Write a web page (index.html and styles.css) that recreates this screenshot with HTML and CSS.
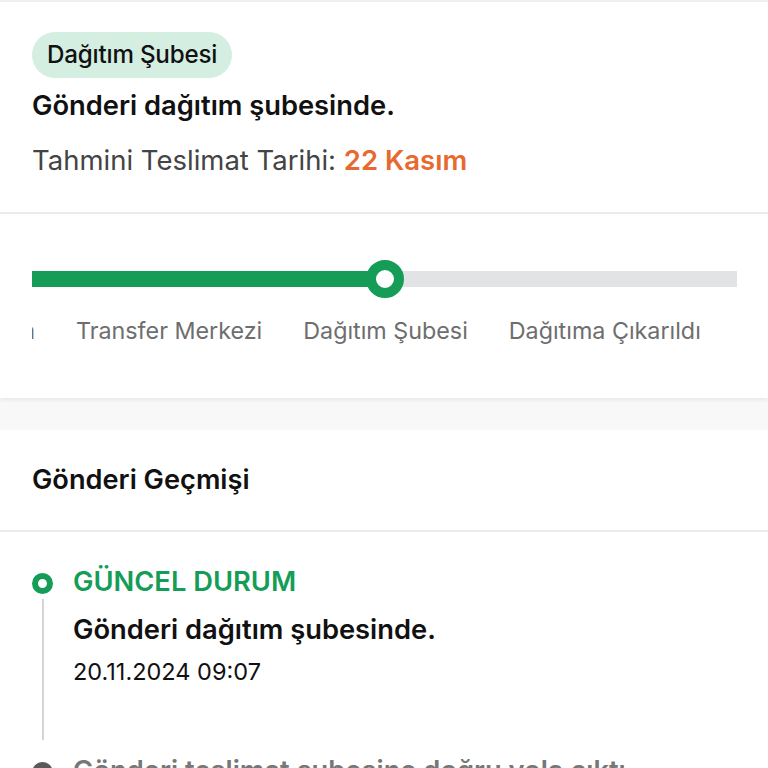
FILE: index.html
```html
<!DOCTYPE html>
<html>
    <head>
        <title>Gönderi Takip</title>
        <link rel="stylesheet" href="styles.css">
    </head>

    <body>
        <div class="summary">
            <span class="badge">Dağıtım Şubesi</span>
            <p class="summary-title">Gönderi dağıtım şubesinde.</p>
            <p class="summary-date">Tahmini Teslimat Tarihi: <span class="date-value">22 Kasım</span></p>
        </div>

        <div class="progress">
            <div class="bar">
                <div class="bar-fill" style="width: 353px;"></div>
                <div class="bar-dot" style="left: 334px;"></div>
            </div>
            <div class="steps">
                <div class="steps-track">
                    <span class="step">Yolda</span>
                    <span class="step">Transfer Merkezi</span>
                    <span class="step">Dağıtım Şubesi</span>
                    <span class="step">Dağıtıma Çıkarıldı</span>
                    <span class="step">Teslim Edildi</span>
                </div>
            </div>
        </div>

        <div class="gap"></div>

        <div class="history">
            <div class="history-head">Gönderi Geçmişi</div>

            <div class="events">
                <div class="event">
                    <div class="event-side">
                        <span class="ring"></span>
                        <span class="event-line"></span>
                    </div>
                    <div class="event-body">
                        <p class="event-status">GÜNCEL DURUM</p>
                        <p class="event-title">Gönderi dağıtım şubesinde.</p>
                        <p class="event-time">20.11.2024 09:07</p>
                    </div>
                </div>

                <div class="event past">
                    <div class="event-side">
                        <svg class="check" width="21" height="21" viewBox="0 0 21 21">
                            <circle cx="10.5" cy="10.5" r="10.5" fill="#5a5a5a"/>
                            <path d="M6 10.8l3 3 6-6.2" stroke="white" stroke-width="2.2" fill="none" stroke-linecap="round" stroke-linejoin="round"/>
                        </svg>
                        <span class="event-line"></span>
                    </div>
                    <div class="event-body">
                        <p class="event-title">Gönderi teslimat şubesine doğru yola çıktı.</p>
                        <p class="event-time">20.11.2024 06:12</p>
                    </div>
                </div>
            </div>
        </div>
    </body>
</html>
```

FILE: styles.css
```css
body {
    margin: 0;
    background-color: white;
    font-family: Inter, "Noto Sans", sans-serif;
    color: #111;
}

p {
    margin: 0;
}

.summary {
    border-top: 2px solid #f0f0f0;
    border-bottom: 2px solid #ececec;
    padding: 30px 32px 36px;
}
.badge {
    display: inline-block;
    background-color: #d4eee2;
    border-radius: 23px;
    padding: 0 15px;
    height: 46px;
    line-height: 46px;
    font-size: 24.2px;
    font-weight: 500;
    letter-spacing: -0.2px;
}
.summary-title {
    margin-top: 12px;
    font-size: 27.3px;
    line-height: 32px;
    font-weight: 600;
}
.summary-date {
    margin-top: 22px;
    font-size: 27.5px;
    line-height: 32px;
    color: #444;
}
.date-value {
    color: #e8692f;
    font-weight: 600;
}

.progress {
    padding: 46px 31px 52px 32px;
    box-shadow: 0 2px 4px rgba(0, 0, 0, 0.07);
    position: relative;
}
.bar {
    position: relative;
    height: 38px;
    display: flex;
    align-items: center;
}
.bar::before {
    content: "";
    position: absolute;
    left: 0;
    right: 0;
    height: 16px;
    background-color: #e2e3e5;
}
.bar-fill {
    position: relative;
    height: 16px;
    background-color: #159d58;
}
.bar-dot {
    position: absolute;
    top: 0;
    width: 18px;
    height: 18px;
    border: 10px solid #159d58;
    border-radius: 50%;
    background-color: white;
}
.steps {
    margin-top: 18px;
    overflow: hidden;
}
.steps-track {
    display: flex;
    gap: 41px;
    margin-left: -58px;
    white-space: nowrap;
}
.step {
    font-size: 23.3px;
    line-height: 30px;
    color: #6e6e6e;
}

.gap {
    height: 32px;
    background-color: #f8f8f8;
}

.history-head {
    padding: 32px;
    font-size: 27.2px;
    line-height: 36px;
    font-weight: 600;
    border-bottom: 2px solid #ececec;
}
.events {
    padding: 34px 32px 0;
}
.event {
    display: flex;
    gap: 20px;
}
.event-side {
    width: 21px;
    display: flex;
    flex-direction: column;
    align-items: center;
    padding-top: 7px;
}
.ring {
    width: 9px;
    height: 9px;
    border: 6px solid #159d58;
    border-radius: 50%;
}
.event-line {
    flex: 1;
    width: 2px;
    background-color: #d4d4d4;
    margin: 5px 0 15px;
}
.event-body {
    padding-bottom: 68px;
}
.event-status {
    font-size: 27.3px;
    line-height: 32px;
    font-weight: 600;
    color: #159d58;
}
.event-title {
    margin-top: 16px;
    font-size: 27.3px;
    line-height: 32px;
    font-weight: 600;
}
.event-time {
    margin-top: 11px;
    font-size: 23.5px;
    line-height: 30px;
}
.past .event-title {
    margin-top: 0;
    color: #777;
}
.past .event-time {
    color: #777;
}
```
